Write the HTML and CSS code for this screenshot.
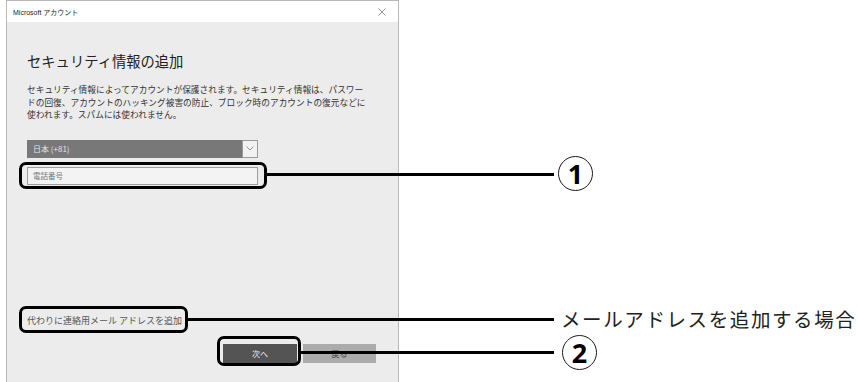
FILE: index.html
```html
<!DOCTYPE html>
<html lang="ja">
<head>
<meta charset="utf-8">
<link rel="stylesheet" href="styles.css">
</head>
<body>
<div class="window">
  <div class="titlebar">
    <span class="title">Microsoft アカウント</span>
    <svg class="close" width="8" height="8" viewBox="0 0 8 8"><path d="M0.5 0.5 L7.5 7.5 M7.5 0.5 L0.5 7.5" stroke="#777" stroke-width="0.8" fill="none"/></svg>
  </div>
  <div class="content">
    <h1 class="heading">セキュリティ情報の追加</h1>
    <p class="desc">セキュリティ情報によってアカウントが保護されます。セキュリティ情報は、パスワー<br>ドの回復、アカウントのハッキング被害の防止、ブロック時のアカウントの復元などに<br>使われます。スパムには使われません。</p>
    <div class="select">
      <span class="select-text">日本 (+81)</span>
      <span class="chev"><svg width="8" height="5" viewBox="0 0 8 5"><path d="M0.5 0.5 L4 4 L7.5 0.5" stroke="#888" stroke-width="0.9" fill="none"/></svg></span>
    </div>
    <div class="input"><span class="placeholder">電話番号</span></div>
    <div class="link">代わりに連絡用メール アドレスを追加</div>
    <div class="buttons">
      <div class="btn btn-next">次へ</div>
      <div class="btn btn-back">戻る</div>
    </div>
  </div>
</div>

<div class="callout c1"></div>
<div class="line l1"></div>
<div class="num n1">1</div>

<div class="callout c2"></div>
<div class="line l2"></div>
<div class="label">メールアドレスを追加する場合</div>

<div class="callout c3"></div>
<div class="line l3"></div>
<div class="num n2">2</div>
</body>
</html>
```

FILE: styles.css
```css
html, body {
  margin: 0;
  padding: 0;
  background: #fff;
  width: 858px;
  height: 382px;
  overflow: hidden;
  font-family: "Noto Sans CJK JP", "Noto Sans", sans-serif;
}
body { position: relative; }

.window {
  margin-left: 6px;
  width: 393px;
  height: 390px;
  box-sizing: border-box;
  border: 1px solid #b8b8b8;
  background: #ececec;
}
.titlebar {
  height: 21px;
  background: #fff;
  display: flex;
  align-items: center;
  justify-content: space-between;
  padding: 0 12px 0 6px;
}
.title {
  font-size: 7px;
  color: #222;
  font-family: "Liberation Sans", "Noto Sans CJK JP", sans-serif;
}
.close { display: block; }

.content { padding-left: 20px; }
.heading {
  margin: 29px 0 0 0;
  font-size: 14.3px;
  line-height: 20px;
  font-weight: 400;
  color: #222;
}
.desc {
  margin: 13px 0 0 0;
  font-size: 8.7px;
  line-height: 12.5px;
  color: #333;
  white-space: nowrap;
}
.select {
  margin-top: 18px;
  width: 231px;
  height: 18px;
  box-sizing: border-box;
  background: #787878;
  display: flex;
  align-items: center;
  justify-content: space-between;
}
.select-text {
  padding-left: 6px;
  font-size: 8px;
  color: #e4e4e4;
}
.chev {
  width: 16px;
  height: 18px;
  box-sizing: border-box;
  background: #f2f2f2;
  border: 1px solid #9a9a9a;
  display: flex;
  align-items: center;
  justify-content: center;
}
.input {
  margin-top: 9px;
  width: 231px;
  height: 18px;
  box-sizing: border-box;
  background: #f3f3f3;
  border: 1.5px solid #9d9d9d;
  display: flex;
  align-items: center;
  padding-left: 5px;
}
.placeholder {
  font-size: 7.5px;
  color: #777;
}
.link {
  margin-top: 129px;
  font-size: 9px;
  line-height: 14px;
  color: #555;
  white-space: nowrap;
}
.buttons {
  margin-top: 16px;
  padding-left: 196px;
  display: flex;
  gap: 6px;
}
.btn {
  width: 74px;
  height: 19px;
  display: flex;
  align-items: center;
  justify-content: center;
  font-size: 8px;
}
.btn-next { background: #545454; color: #eee; }
.btn-back { background: #ababab; color: #444; width: 73px; }

.callout {
  position: absolute;
  box-sizing: border-box;
  border: 3px solid #000;
  border-radius: 7px;
}
.c1 { left: 19px; top: 162px; width: 248px; height: 27px; }
.c2 { left: 19px; top: 306px; width: 169px; height: 27px; }
.c3 { left: 217px; top: 336px; width: 84px; height: 30px; }

.line {
  position: absolute;
  height: 3px;
  background: #000;
}
.l1 { left: 266px; top: 173px; width: 288px; }
.l2 { left: 187px; top: 318px; width: 367px; }
.l3 { left: 300px; top: 351px; width: 254px; }

.num {
  position: absolute;
  box-sizing: border-box;
  width: 35px;
  height: 35px;
  border: 1.6px solid #1a1a1a;
  border-radius: 50%;
  display: flex;
  align-items: center;
  justify-content: center;
  font-family: "Noto Sans", sans-serif;
  font-weight: 700;
  font-size: 27px;
  line-height: 1;
  color: #000;
}
.n1 { left: 558px; top: 156px; }
.n2 { left: 562px; top: 335px; }

.label {
  position: absolute;
  left: 561px;
  top: 305px;
  font-size: 19.5px;
  line-height: 28px;
  letter-spacing: 1.6px;
  color: #222;
  white-space: nowrap;
}
```
